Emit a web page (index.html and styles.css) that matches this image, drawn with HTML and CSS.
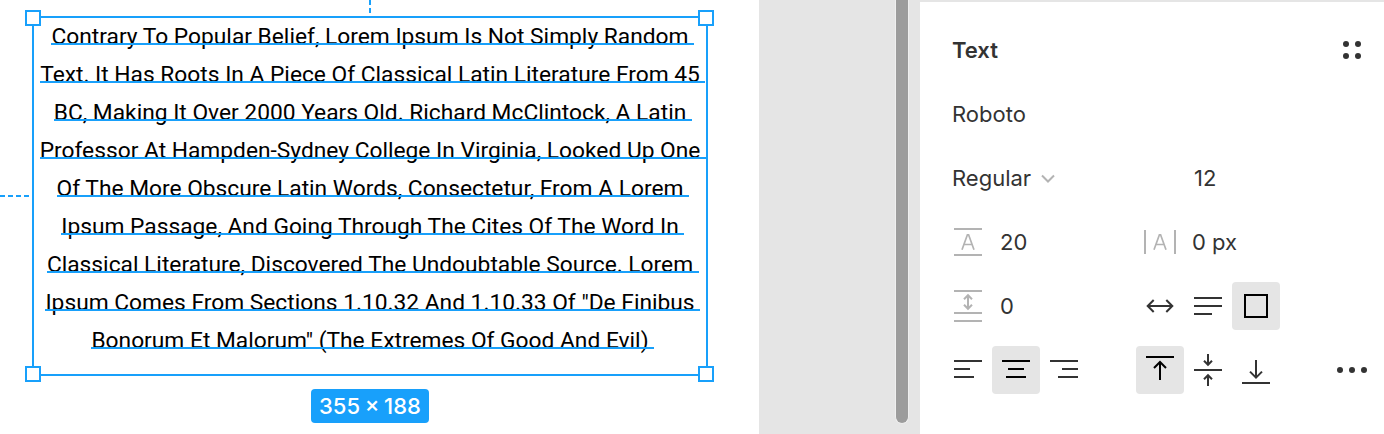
FILE: index.html
```
<!DOCTYPE html>
<html lang="en">
<head>
<meta charset="utf-8">
<title>Text editor</title>
<link rel="stylesheet" href="styles.css">
</head>
<body>
<div class="app">
  <main class="canvas">
    <div class="guide guide-v"></div>
    <div class="guide guide-h"></div>
    <div class="selection">
      <p class="line"><span>Contrary To Popular Belief, Lorem Ipsum Is Not Simply Random</span></p>
      <p class="line"><span>Text. It Has Roots In A Piece Of Classical Latin Literature From 45</span></p>
      <p class="line"><span>BC, Making It Over 2000 Years Old. Richard McClintock, A Latin</span></p>
      <p class="line"><span>Professor At Hampden-Sydney College In Virginia, Looked Up One</span></p>
      <p class="line"><span>Of The More Obscure Latin Words, Consectetur, From A Lorem</span></p>
      <p class="line"><span>Ipsum Passage, And Going Through The Cites Of The Word In</span></p>
      <p class="line"><span>Classical Literature, Discovered The Undoubtable Source. Lorem</span></p>
      <p class="line"><span>Ipsum Comes From Sections 1.10.32 And 1.10.33 Of "De Finibus</span></p>
      <p class="line"><span>Bonorum Et Malorum" (The Extremes Of Good And Evil)</span></p>
      <i class="handle nw"></i><i class="handle ne"></i><i class="handle sw"></i><i class="handle se"></i>
    </div>
    <div class="size">355 × 188</div>
  </main>
  <div class="gutter"><div class="thumb"></div></div>
  <aside class="panel">
    <div class="row head">
      <h2>Text</h2>
      <svg class="styles" width="48" height="48"><circle cx="18" cy="18" r="3"/><circle cx="30" cy="18" r="3"/><circle cx="18" cy="30" r="3"/><circle cx="30" cy="30" r="3"/></svg>
    </div>
    <div class="row"><span>Roboto</span></div>
    <div class="row">
      <div class="cell"><span>Regular</span><svg class="chev" width="16" height="12"><path d="M2 3.500l6 6 6-6"/></svg></div>
      <div class="cell size-value">12</div>
    </div>
    <div class="row">
      <div class="cell"><svg class="ico muted" width="48" height="48"><path d="M2 11h28M2 37h28"/><path class="thin" d="M10 31.700L15.400 16.800h1.200L22 31.700M11.800 26.500h8.400"/></svg><span>20</span></div>
      <div class="cell"><svg class="ico muted" width="48" height="48"><path d="M1 12v24M31 12v24"/><path class="thin" d="M10 31.700L15.400 16.800h1.200L22 31.700M11.800 26.500h8.400"/></svg><span>0 px</span></div>
    </div>
    <div class="row">
      <div class="cell"><svg class="ico muted" width="48" height="48"><path d="M2 9h28M2 31h28M2 39h28M16 13.500v13M12 17.200l4-4 4 4M12 22.800l4 4 4-4"/></svg><span>0</span></div>
      <div class="cell tools">
        <svg class="tool" width="48" height="48"><path d="M12 24h24M17.700 18L11.700 24l6 6M30.300 18L36.300 24l-6 6"/></svg>
        <svg class="tool" width="48" height="48"><path d="M10 16h28M10 24h28M10 32h18"/></svg>
        <svg class="tool on" width="48" height="48"><path d="M13 13h22v22h-22z"/></svg>
      </div>
    </div>
    <div class="row">
      <div class="cell tools start">
        <svg class="tool" width="48" height="48"><path d="M10 15h28M10 23h16M10 31h20"/></svg>
        <svg class="tool on" width="48" height="48"><path d="M10 15h28M16 23h16M14 31h20"/></svg>
        <svg class="tool" width="48" height="48"><path d="M10 15h28M22 23h16M18 31h20"/></svg>
      </div>
      <div class="cell tools">
        <svg class="tool on" width="48" height="48"><path d="M10 11h28M24 34V16.500M18 22l6-6 6 6"/></svg>
        <svg class="tool" width="48" height="48"><path d="M10 24h28M24 8v10.500M20 14.800l4 4 4-4M24 40V29.500M20 33.200l4-4 4 4"/></svg>
        <svg class="tool" width="48" height="48"><path d="M10 37h28M24 14v18M18 25.600l6 6 6-6"/></svg>
      </div>
      <svg class="styles" width="48" height="48"><circle cx="12" cy="24" r="3"/><circle cx="24" cy="24" r="3"/><circle cx="36" cy="24" r="3"/></svg>
    </div>
  </aside>
</div>
</body>
</html>
```
FILE: styles.css
```
* { box-sizing: border-box; }
body { margin: 0; background: #fff; }
.app { display: flex; width: 1384px; height: 434px; overflow: hidden; }

.canvas { position: relative; width: 759px; background: #fff; padding: 16px 0 0 32px; }
.selection {
  position: relative; width: 676px; height: 360px;
  border: 2px solid #18a0fb;
  font: 22.75px/38px Roboto, sans-serif; color: #000;
}
.line { margin: 0; height: 38px; display: flex; justify-content: center; white-space: nowrap; }
.line span { position: relative; }
.line span::after {
  content: ""; position: absolute; left: 0; right: -5.5px; top: 25px; height: 2px; background: #18a0fb;
}
.handle { position: absolute; width: 16px; height: 16px; background: #fff; border: 2px solid #18a0fb; }
.nw { left: -9px; top: -8px; }
.ne { right: -8px; top: -8px; }
.sw { left: -9px; bottom: -8px; }
.se { right: -8px; bottom: -8px; }
.guide { position: absolute; }
.guide-v { left: 369px; top: 0; width: 2px; height: 16px; background: repeating-linear-gradient(to bottom, #18a0fb 0 5px, transparent 5px 8px); }
.guide-h { left: 0; top: 195px; width: 32px; height: 2px; background: repeating-linear-gradient(to right, #18a0fb 0 5px, transparent 5px 8px); }
.size {
  width: 118px; height: 34px; margin: 13px 0 0 279px; border-radius: 4px;
  background: #18a0fb; color: #fff; text-align: center;
  font: 500 22px/34px Inter, sans-serif; word-spacing: -1.2px;
}

.gutter { width: 161px; background: #e5e5e5; padding-left: 136px; }
.thumb { width: 14px; height: 424px; background: #9c9c9c; border: 1px solid #efefef; border-top: 0; border-radius: 0 0 7px 7px; }

.panel {
  width: 464px; border-top: 2px solid #e5e5e5; padding: 16px 8px 0 32px;
  background: #fff; color: #333; font: 22px/48px Inter, sans-serif;
}
.row { display: flex; align-items: center; height: 64px; }
.head { justify-content: space-between; }
h2 { margin: 0; font-size: 22px; font-weight: 600; }
.cell { display: flex; align-items: center; width: 192px; flex: none; }
.size-value { padding-left: 50px; }
.start { margin-left: -8px; }
.row > .tools:nth-child(2) { margin-left: -8px; }
.row > .start + .tools:nth-child(2) { margin-left: 0; }
svg { display: block; fill: none; stroke: #333; stroke-width: 2; flex: none; }
.styles { fill: #333; stroke: none; }
.muted { stroke: #b3b3b3; }
.thin { stroke-width: 1.7; }
.chev { stroke: #b3b3b3; margin-left: 9px; }
.on { background: #e5e5e5; border-radius: 4px; stroke: #000; }
```
